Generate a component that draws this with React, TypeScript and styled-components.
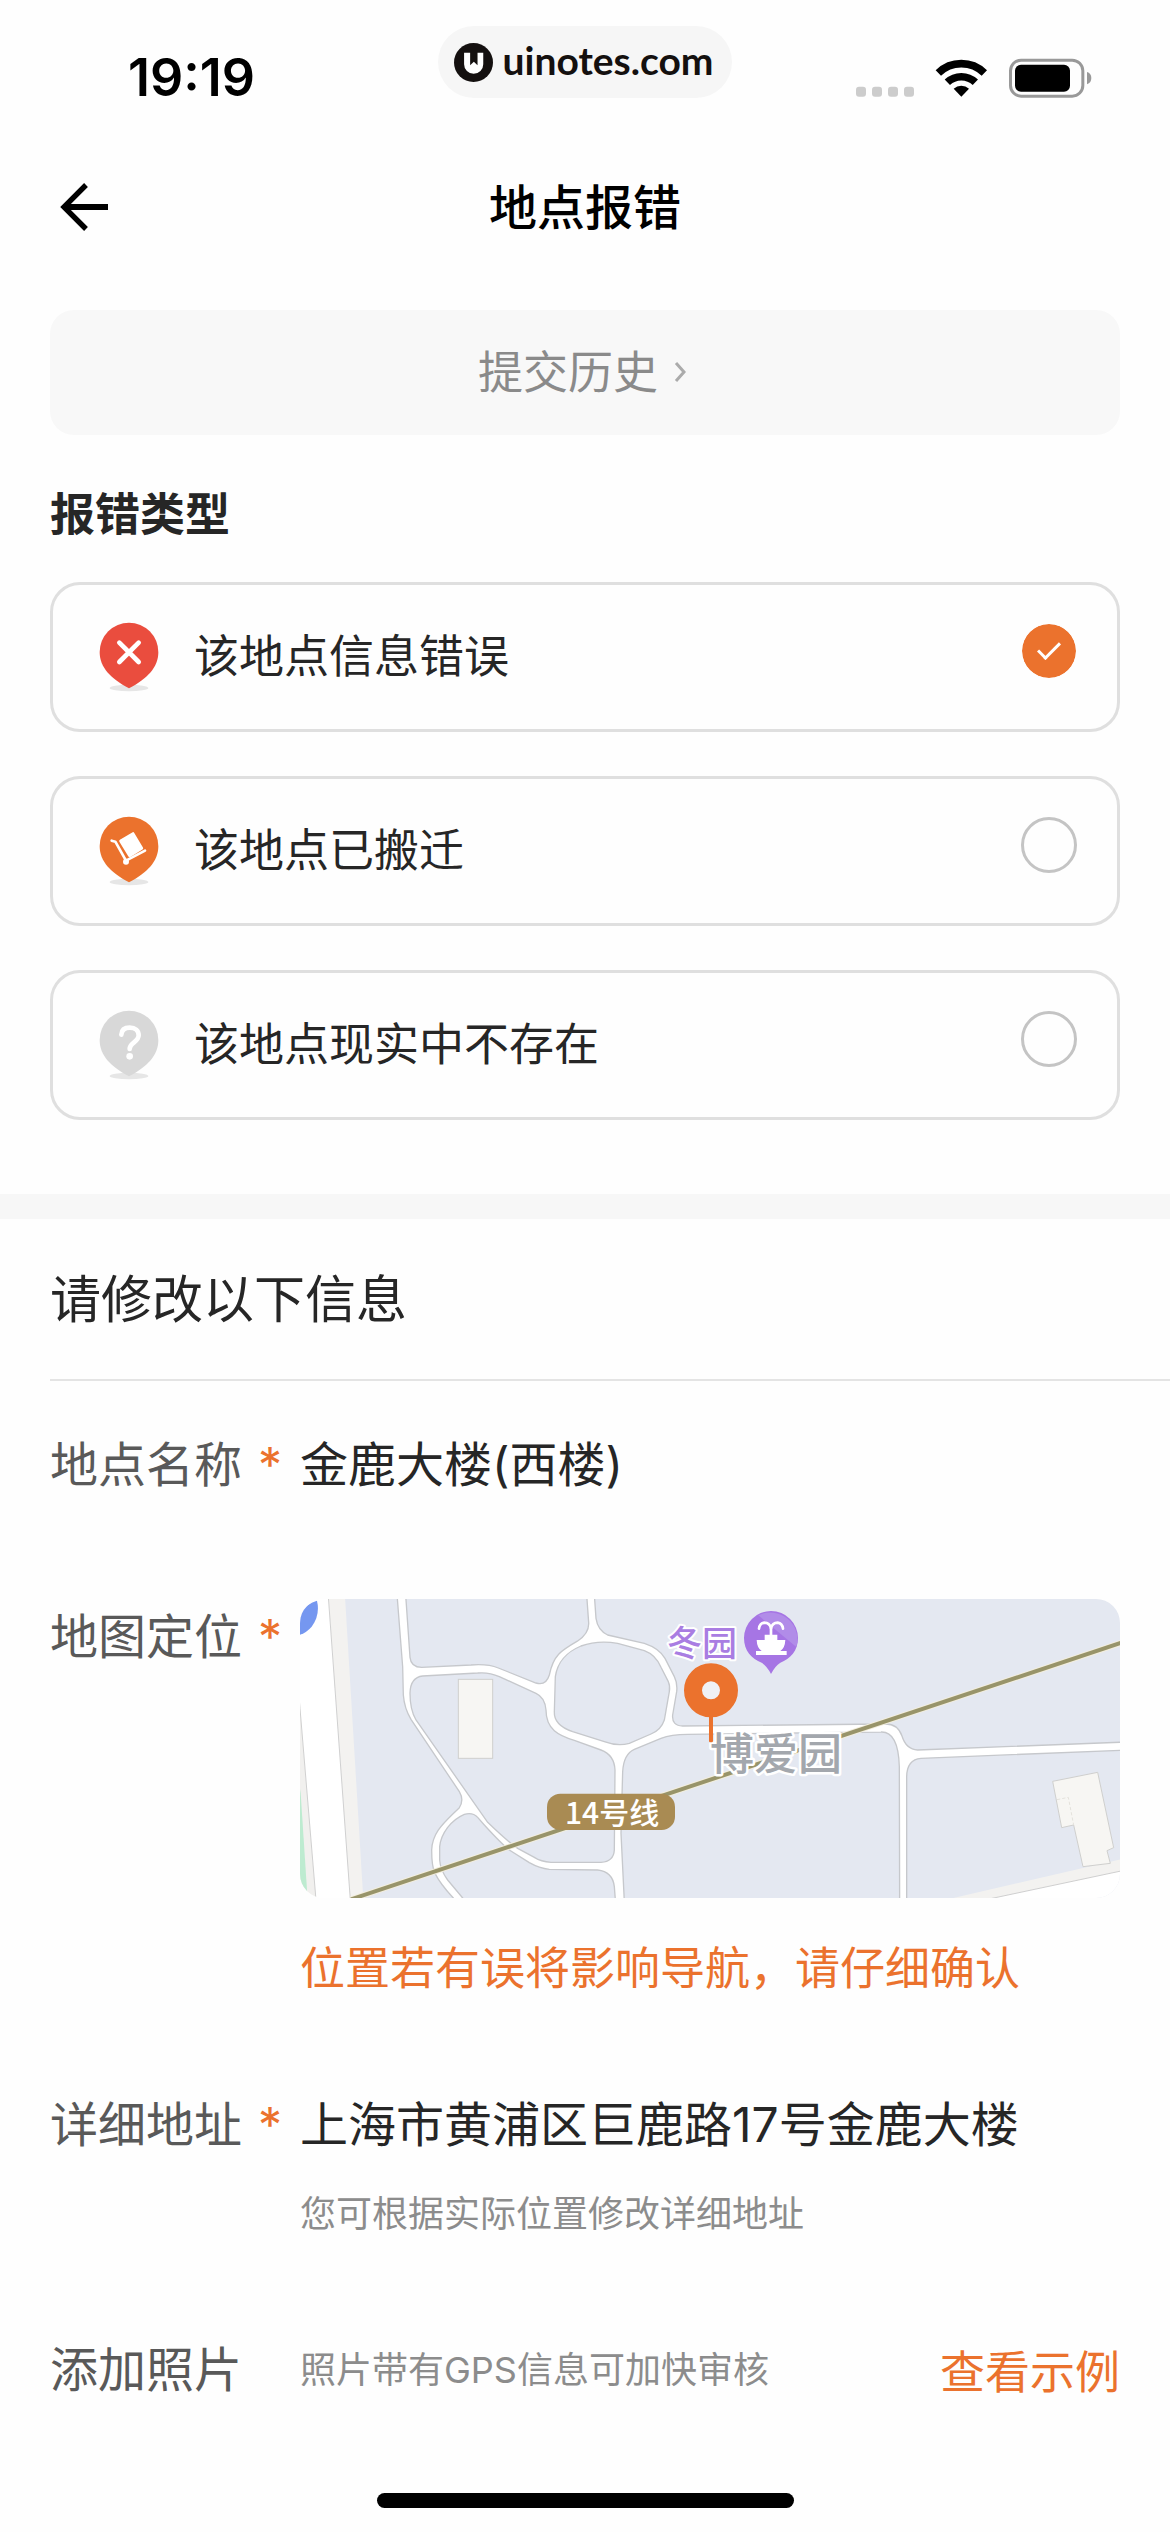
import React, { useState } from "react";
import styled, { createGlobalStyle } from "styled-components";

const ORANGE = "#eb722d";
const INK = "#262626";

const GlobalStyle = createGlobalStyle`
  *, *::before, *::after { box-sizing: border-box; }
  body {
    margin: 0;
    background: #fefefe;
    color: ${INK};
    font-family: Inter, "Noto Sans CJK SC", sans-serif;
  }
  h1, h2, p, fieldset { margin: 0; padding: 0; border: 0; }
  button, input { font: inherit; color: inherit; }
`;

const Page = styled.div`
  display: flex;
  flex-direction: column;
  min-height: 100vh;
`;

/* ---------- status bar ---------- */

const StatusBar = styled.div`
  display: grid;
  grid-template-columns: 1fr auto 1fr;
  align-items: center;
  height: 156px;
  padding: 0 78px 0 128px;
`;

const Clock = styled.time`
  color: #000;
  font-size: 52px;
  font-weight: 600;
  line-height: 60px;
`;

const BrandPill = styled.div`
  display: flex;
  align-items: center;
  align-self: start;
  gap: 9px;
  height: 72px;
  margin: 26px 50px 0 0;
  padding: 0 18px 0 16px;
  border-radius: 36px;
  background: #f6f6f6;
  color: #14100f;
`;

const BrandName = styled.span`
  padding-bottom: 4px;
  font-family: Lato, sans-serif;
  font-size: 39px;
  font-weight: 700;
  line-height: 48px;
`;

const StatusIcons = styled.div`
  display: flex;
  align-items: center;
  justify-content: flex-end;
`;

/* ---------- navigation ---------- */

const NavBar = styled.header`
  display: grid;
  grid-template-columns: 1fr auto 1fr;
  align-items: center;
  height: 102px;
  padding: 0 60px;
`;

const BackButton = styled.button`
  display: flex;
  width: 48px;
  padding: 0;
  border: 0;
  background: none;
`;

const NavTitle = styled.h1`
  padding-top: 2px;
  color: #000;
  font-size: 48px;
  font-weight: 500;
  line-height: 72px;
`;

/* ---------- report type ---------- */

const TypeSection = styled.section`
  padding: 52px 50px 74px;
`;

const HistoryButton = styled.button`
  display: flex;
  align-items: center;
  justify-content: center;
  gap: 16px;
  width: 100%;
  height: 125px;
  padding: 0 6px 6px 0;
  border: 0;
  border-radius: 24px;
  background: #f8f8f8;
  color: #8a8a8a;
  font-size: 45px;

  svg {
    margin-top: 4px;
  }
`;

const TypeHeading = styled.h2`
  margin: 46px 0 33px;
  font-size: 45px;
  font-weight: 700;
  line-height: 68px;
`;

const OptionList = styled.fieldset`
  display: flex;
  flex-direction: column;
  gap: 44px;
`;

const OptionCard = styled.label`
  display: flex;
  align-items: center;
  gap: 35px;
  height: 150px;
  padding: 0 40px 0 46px;
  border: 3px solid #dfdfdf;
  border-radius: 30px;
  font-size: 45px;
  line-height: 68px;
`;

const OptionText = styled.span`
  flex: 1;
`;

const Radio = styled.input`
  appearance: none;
  display: grid;
  place-items: center;
  width: 56px;
  height: 56px;
  margin: 0 0 12px;
  border: 3px solid #c4c4c4;
  border-radius: 50%;

  &:checked {
    border-width: 1px;
    border-color: #fefefe;
    background: ${ORANGE};
    background-clip: padding-box;
  }

  &:checked::after {
    content: "";
    width: 12px;
    height: 22px;
    margin-bottom: 6px;
    border: solid #fff;
    border-width: 0 3px 3px 0;
    transform: rotate(45deg);
  }
`;

const Band = styled.div`
  height: 25px;
  background: #f7f7f7;
`;

/* ---------- form ---------- */

const FormSection = styled.section`
  padding-left: 50px;
`;

const FormHeading = styled.h2`
  padding: 45px 0 43px;
  border-bottom: 2px solid #e4e4e4;
  font-size: 51px;
  font-weight: 400;
  line-height: 72px;
`;

const Fields = styled.div`
  display: flex;
  flex-direction: column;
  gap: 92px;
  padding: 44px 50px 0 0;
`;

const Field = styled.div`
  display: grid;
  grid-template-columns: 250px 1fr;
  align-items: start;
  font-size: 48px;
  line-height: 80px;
`;

const FieldLabel = styled.label`
  display: flex;
  gap: 16px;
  color: #595959;
`;

const Required = styled.span`
  color: ${ORANGE};
`;

const FieldBody = styled.div`
  min-width: 0;
`;

const TextInput = styled.input`
  display: block;
  width: 100%;
  height: 80px;
  padding: 0;
  border: 0;
  outline: 0;
  background: none;
`;

const MapFrame = styled.div`
  height: 299px;
  margin-top: 2px;
  overflow: hidden;
  border-radius: 24px;

  svg {
    display: block;
    width: 100%;
    height: 100%;
  }
`;

const Warning = styled.p`
  margin-top: 47px;
  color: ${ORANGE};
  font-size: 45px;
  line-height: 48px;
`;

const Hint = styled.p`
  color: #8c8c8c;
  font-size: 36px;
  line-height: 48px;
`;

const AddressHint = styled(Hint)`
  margin-top: 25px;
`;

const PhotoBody = styled(FieldBody)`
  display: flex;
  align-items: center;
  justify-content: space-between;
  height: 80px;
`;

const ExampleLink = styled.a`
  padding-top: 6px;
  color: ${ORANGE};
  font-size: 45px;
  text-decoration: none;
`;

const HomeIndicator = styled.div`
  width: 417px;
  height: 15px;
  margin: auto auto 24px;
  border-radius: 8px;
  background: #000;
`;

/* ---------- drawings ---------- */

const BrandLogo = () => (
  <svg width="39" height="39" viewBox="76 98 116 116" aria-hidden="true">
    <circle cx="134" cy="156" r="58" fill="#14100f" />
    <path d="M106 127H124V164L135 154L146 164V127H163V161A28.500 28.500 0 0 1 106 161Z" fill="#fff" />
  </svg>
);

const StatusGlyphs = () => (
  <svg width="236" height="40" viewBox="48 52 708 120" aria-hidden="true">
    {[48, 96, 144, 192].map((x) => (
      <rect key={x} x={x} y="138" width="30" height="30" rx="9" fill="#cccccc" />
    ))}
    <g fill="none" stroke="#000" strokeWidth="23">
      <path d="M295 97A99 99 0 0 1 433 97" />
      <path d="M322 125A61 61 0 0 1 406 125" />
    </g>
    <path d="M341 144A34 34 0 0 1 387 144L364 168Z" />
    <rect x="511.500" y="58.500" width="217" height="108" rx="32" fill="none" stroke="#999" strokeWidth="9" />
    <rect x="525" y="72" width="165" height="81" rx="18" />
    <path d="M741 94Q754 98 754 112Q754 126 741 131Z" fill="#999" />
  </svg>
);

const BackArrow = () => (
  <svg width="48" height="48" viewBox="60 428 144 144" fill="none" stroke="#000" aria-hidden="true">
    <path d="M138 434L72 500L138 566" strokeWidth="16" />
    <path d="M73 500H204" strokeWidth="18" />
  </svg>
);

const Chevron = () => (
  <svg width="12" height="20" viewBox="0 0 12 20" fill="none" stroke="#ababab" strokeWidth="3" aria-hidden="true">
    <path d="M2 1L10 10L2 19" />
  </svg>
);

const Pin = ({ color, children }: { color: string; children: React.ReactNode }) => (
  <svg width="60" height="70" viewBox="57 70 180 210" aria-hidden="true">
    <ellipse cx="147" cy="268" rx="58" ry="10" fill="#e6e6e6" />
    <path
      d="M147 72A88 88 0 0 1 235 160C235 207 201 240 147 269C93 240 59 207 59 160A88 88 0 0 1 147 72Z"
      fill={color}
    />
    {children}
  </svg>
);

const WrongPin = () => (
  <Pin color="#ea4d3e">
    <path d="M118 132L176 190M176 132L118 190" stroke="#fff" strokeWidth="14" strokeLinecap="round" />
  </Pin>
);

const MovedPin = () => (
  <Pin color={ORANGE}>
    <path d="M122 145L159 123L185 167L149 189Z" fill="#fff" stroke="#fff" strokeWidth="9" strokeLinejoin="round" />
    <path
      d="M95 144L106 147L138 204L195 174"
      fill="none"
      stroke="#fff"
      strokeWidth="8"
      strokeLinecap="round"
      strokeLinejoin="round"
    />
    <circle cx="138" cy="207" r="9" fill="#fff" />
  </Pin>
);

const MissingPin = () => (
  <Pin color="#d8d8d8">
    <path
      d="M124 144C125 129 135 123 149 123C166 123 176 132 176 146C176 166 149 168 149 187"
      fill="none"
      stroke="#fff"
      strokeWidth="14"
      strokeLinecap="round"
    />
    <circle cx="149" cy="209" r="10" fill="#fff" />
  </Pin>
);

const BLOCKS = [
  "M130 30L317 30L335 260L337 345Q340 385 360 418L505 635Q520 660 505 683C460 728 424 755 422 810Q422 860 432 880Q448 912 487 954L510 985L130 985Z",
  "M343 30L357 232Q360 262 392 262L540 255Q590 251 622 264L735 309Q765 318 775 285C787 225 810 212 860 183Q895 160 893 128L886 30Z",
  "M357 340Q358 292 395 288L560 279Q595 276 625 290L735 340Q762 352 765 390Q765 430 790 452Q808 468 850 481L930 510Q970 525 972 570L970 810Q968 845 930 847L780 847Q750 845 730 832L680 805Q650 785 590 727L375 420Q357 390 357 340Z",
  "M790 395L793 290C800 240 830 215 870 198Q920 180 980 190L1060 212Q1095 225 1110 262L1132 305Q1138 318 1135 335L1120 420Q1110 450 1080 462L1015 490Q980 500 940 485L845 455Q788 435 790 395Z",
  "M909 30L915 115Q920 150 950 165L1060 190Q1105 205 1122 235L1150 290Q1160 310 1157 335L1145 405Q1142 437 1175 438L1780 432Q1820 430 1833 468Q1845 508 1880 510L2510 486L2510 30Z",
  "M995 575Q998 522 1030 508L1110 475Q1140 463 1190 463L1770 456Q1822 454 1825 560L1826 985L1001 985L990 760Z",
  "M520 703C480 720 450 760 446 800L446 840Q448 870 470 900L515 954L535 985L975 985L970 920Q965 875 920 870L775 868Q745 865 715 848L655 810Q630 790 580 735L560 712Q545 696 520 703Z",
  "M1847 590Q1848 538 1890 535L2510 510L2510 985L1847 985Z",
];

const LocationMap = () => (
  <svg viewBox="0 0 820 299" preserveAspectRatio="xMidYMid slice" role="img" aria-label="地图定位">
    <g transform="scale(0.33333) translate(-27 -57)">
      <rect x="20" y="50" width="2480" height="910" fill="#fff" />
      {BLOCKS.map((d) => (
        <path key={d} d={d} fill="#e4e8f1" stroke="#c6c8cc" strokeWidth="4" />
      ))}

      <path d="M112 50L162 50L217 960L178 960Z" fill="#f3f2f0" />
      <path d="M20 50L112 50L178 960L20 960Z" fill="#fff" />
      <path d="M112 50L178 960" stroke="#d0d0d0" strokeWidth="3" />
      <path d="M20 300L27 385L75 960L20 960Z" fill="#f1f0ee" stroke="#d0d0d0" strokeWidth="3" />
      <path d="M20 580L29 640L50 960L20 960Z" fill="#bdebd0" />
      <path d="M78 62Q88 105 62 140Q45 160 20 166L20 110Q45 70 78 62Z" fill="#7597f0" />

      <path d="M1970 958L2495 837L2495 875L2080 960Z" fill="#f3f2f0" />
      <path d="M2080 960L2495 872L2495 970L2080 970Z" fill="#fff" />
      <path d="M2080 960L2495 872" stroke="#cfcfcf" strokeWidth="3" />

      <g fill="#f7f6f3" stroke="#cfcfcd" strokeWidth="3">
        <rect x="502" y="298" width="103" height="237" />
        <path d="M2285 604L2420 577L2468 803L2448 812L2458 850L2376 860L2348 735L2312 743Z" />
        <path d="M2298 659L2332 652L2348 735" fill="none" stroke="#e4e2dc" strokeDasharray="10 6" />
      </g>

      <path d="M180 958L2495 187" stroke="#f3eedd" strokeWidth="18" />
      <path d="M180 958L2495 187" stroke="#98946a" strokeWidth="12" />
      <rect x="768" y="641" width="384" height="109" rx="40" fill="#a98b53" />

      <path
        d="M1440 93A81 81 0 0 1 1521 174C1521 212 1498 237 1468 248Q1452 258 1440 282Q1428 258 1412 248C1382 237 1359 212 1359 174A81 81 0 0 1 1440 93Z"
        fill="#a675e4"
      />
      <path d="M1402 106A81 81 0 0 1 1516 201Z" fill="#b18ce8" />
      <g fill="none" stroke="#fff" strokeWidth="8" strokeLinecap="round">
        <path d="M1440 166V145Q1436 128 1420 128Q1406 130 1404 146" />
        <path d="M1440 145Q1444 128 1460 128Q1474 130 1476 146" />
      </g>
      <path d="M1421 164H1459V180H1483Q1482 204 1468 213H1487V225H1395V213H1412Q1398 204 1397 180H1421Z" fill="#fff" />
    </g>

    <g
      fontFamily='"Noto Sans CJK SC", sans-serif'
      fontWeight="500"
      paintOrder="stroke"
      strokeLinejoin="round"
    >
      <text x="367" y="57" fontSize="35" fill="#a97de2" stroke="#fff" strokeWidth="4">冬园</text>
      <text x="410" y="171" fontSize="44" fill="#a3a7ad" stroke="#fff" strokeWidth="5">博爱园</text>
      <text x="265" y="225" fontSize="30" fill="#fff">14号线</text>
    </g>

    <g transform="scale(0.33333) translate(-27 -57)">
      <rect x="1254" y="400" width="12" height="87" rx="4" fill={ORANGE} />
      <circle cx="1260" cy="331" r="54" fill="#f0f1f5" stroke={ORANGE} strokeWidth="54" />
    </g>
  </svg>
);

const OPTIONS = [
  { id: "wrong", text: "该地点信息错误", Icon: WrongPin },
  { id: "moved", text: "该地点已搬迁", Icon: MovedPin },
  { id: "missing", text: "该地点现实中不存在", Icon: MissingPin },
];

export default function App() {
  const [type, setType] = useState("wrong");
  const [name, setName] = useState("金鹿大楼(西楼)");
  const [address, setAddress] = useState("上海市黄浦区巨鹿路17号金鹿大楼");

  return (
    <Page>
      <GlobalStyle />
      <StatusBar>
        <Clock>19:19</Clock>
        <BrandPill>
          <BrandLogo />
          <BrandName>uinotes.com</BrandName>
        </BrandPill>
        <StatusIcons>
          <StatusGlyphs />
        </StatusIcons>
      </StatusBar>

      <NavBar>
        <BackButton type="button" aria-label="返回">
          <BackArrow />
        </BackButton>
        <NavTitle>地点报错</NavTitle>
      </NavBar>

      <TypeSection>
        <HistoryButton type="button">
          提交历史
          <Chevron />
        </HistoryButton>
        <TypeHeading id="type-heading">报错类型</TypeHeading>
        <OptionList aria-labelledby="type-heading">
          {OPTIONS.map(({ id, text, Icon }) => (
            <OptionCard key={id} htmlFor={id}>
              <Icon />
              <OptionText>{text}</OptionText>
              <Radio type="radio" name="type" id={id} checked={type === id} onChange={() => setType(id)} />
            </OptionCard>
          ))}
        </OptionList>
      </TypeSection>

      <Band />

      <FormSection>
        <FormHeading>请修改以下信息</FormHeading>
        <Fields>
          <Field>
            <FieldLabel htmlFor="place-name">
              地点名称 <Required>*</Required>
            </FieldLabel>
            <TextInput id="place-name" value={name} onChange={(e) => setName(e.target.value)} />
          </Field>

          <Field>
            <FieldLabel as="div">
              地图定位 <Required>*</Required>
            </FieldLabel>
            <FieldBody>
              <MapFrame>
                <LocationMap />
              </MapFrame>
              <Warning>位置若有误将影响导航，请仔细确认</Warning>
            </FieldBody>
          </Field>

          <Field>
            <FieldLabel htmlFor="place-address">
              详细地址 <Required>*</Required>
            </FieldLabel>
            <FieldBody>
              <TextInput id="place-address" value={address} onChange={(e) => setAddress(e.target.value)} />
              <AddressHint>您可根据实际位置修改详细地址</AddressHint>
            </FieldBody>
          </Field>

          <Field>
            <FieldLabel as="div">添加照片</FieldLabel>
            <PhotoBody>
              <Hint>照片带有GPS信息可加快审核</Hint>
              <ExampleLink href="#example">查看示例</ExampleLink>
            </PhotoBody>
          </Field>
        </Fields>
      </FormSection>

      <HomeIndicator />
    </Page>
  );
}
